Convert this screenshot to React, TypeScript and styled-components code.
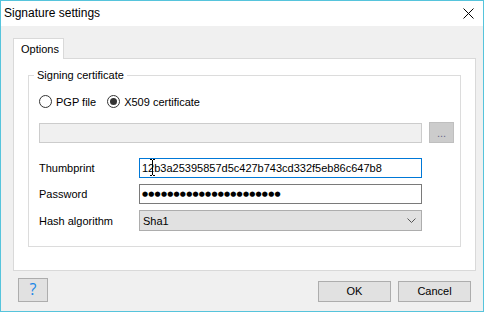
import React from "react";
import styled, { createGlobalStyle } from "styled-components";

const Global = createGlobalStyle`
  html, body { margin: 0; padding: 0; background: #ffffff; }
  body { font-family: "Liberation Sans", Arial, sans-serif; font-size: 11px; color: #000; }
  * { box-sizing: border-box; }
`;

const Window = styled.div`
  width: 484px;
  height: 312px;
  border: 1px solid #56c4dc;
  display: flex;
  flex-direction: column;
  background: #f0f0f0;
  overflow: hidden;
`;

const TitleBar = styled.div`
  flex: none;
  height: 25px;
  background: #ffffff;
  display: flex;
  align-items: center;
  justify-content: space-between;
  padding: 0 9px 0 3px;
`;

const Title = styled.div`
  font-size: 12px;
  line-height: 25px;
  color: #000;
`;

const CloseGlyph = styled.svg`
  display: block;
  width: 11px;
  height: 11px;
`;

const Body = styled.div`
  flex: 1;
  display: flex;
  flex-direction: column;
  padding: 12px 7px 9px 12px;
`;

const TabStrip = styled.div`
  display: flex;
  height: 20px;
`;

const Tab = styled.div<{ $active?: boolean }>`
  position: relative;
  z-index: 1;
  width: 51px;
  height: 21px;
  padding-left: 7px;
  line-height: 20px;
  background: ${(p) => (p.$active ? "#ffffff" : "#f0f0f0")};
  border: 1px solid #d9d9d9;
  border-bottom: none;
`;

const Panel = styled.div`
  height: 213px;
  background: #ffffff;
  border: 1px solid #d9d9d9;
  padding: 16px 14px 0 14px;
`;

const Group = styled.div`
  position: relative;
  height: 172px;
  border: 1px solid #dcdcdc;
  padding: 17px 0 0 10px;
`;

const Legend = styled.span`
  position: absolute;
  top: -8px;
  left: 5px;
  padding: 0 3px;
  line-height: 15px;
  background: #ffffff;
`;

const RadioRow = styled.div`
  display: flex;
  align-items: center;
  height: 17px;
  gap: 11px;
`;

const RadioOption = styled.label`
  display: flex;
  align-items: center;
  gap: 4px;
`;

const RadioCircle = styled.span<{ $checked?: boolean }>`
  width: 13px;
  height: 13px;
  border-radius: 50%;
  border: 1px solid #333333;
  background: #ffffff;
  display: flex;
  align-items: center;
  justify-content: center;
  &::after {
    content: "";
    display: ${(p) => (p.$checked ? "block" : "none")};
    width: 7px;
    height: 7px;
    border-radius: 50%;
    background: #333333;
  }
`;

const PathRow = styled.div`
  display: flex;
  align-items: center;
  gap: 7px;
  margin-top: 12px;
  height: 21px;
`;

const DisabledBox = styled.div`
  width: 383px;
  height: 20px;
  background: #f0f0f0;
  border: 1px solid #cccccc;
`;

const BrowseButton = styled.div`
  width: 25px;
  height: 21px;
  background: #cccccc;
  border: 1px solid #bfbfbf;
  color: #6a6a8a;
  text-align: center;
  line-height: 20px;
  font-size: 11px;
`;

const Form = styled.div`
  display: grid;
  grid-template-columns: 100px 283px;
  grid-template-rows: 20px 20px 21px;
  row-gap: 6px;
  margin-top: 15px;
`;

const FieldLabel = styled.div`
  align-self: center;
  line-height: 14px;
`;

const FieldWrap = styled.div`
  position: relative;
`;

const TextBox = styled.div<{ $focused?: boolean }>`
  height: 100%;
  border: 1px solid ${(p) => (p.$focused ? "#0078d7" : "#7a7a7a")};
  background: #ffffff;
  padding-left: 2px;
  line-height: 18px;
  white-space: nowrap;
  overflow: hidden;
`;

const Dots = styled.span`
  font-family: "DejaVu Sans", sans-serif;
  font-size: 7px;
  letter-spacing: 0.2px;
  line-height: 18px;
  vertical-align: top;
`;

const Combo = styled.div`
  height: 100%;
  display: flex;
  align-items: center;
  justify-content: space-between;
  background: #e1e1e1;
  border: 1px solid #adadad;
  padding: 0 5px 0 3px;
`;

const Chevron = styled.svg`
  display: block;
  width: 9px;
  height: 5px;
`;

const Cursor = styled.svg`
  position: absolute;
  left: 11px;
  top: 1px;
  width: 5px;
  height: 17px;
`;

const ButtonBar = styled.div`
  display: flex;
  align-items: flex-end;
  gap: 7px;
  margin: 7px 5px 0 5px;
`;

const HelpButton = styled.div`
  width: 30px;
  height: 24px;
  background: #e1e1e1;
  border: 1px solid #adadad;
  color: #1a86e6;
  font-family: "Open Sans", "Liberation Sans", sans-serif;
  font-size: 16px;
  font-weight: 400;
  line-height: 21px;
  text-align: center;
`;

const DialogButton = styled.div<{ $first?: boolean }>`
  width: 73px;
  height: 21px;
  margin-left: ${(p) => (p.$first ? "auto" : "0")};
  background: #e1e1e1;
  border: 1px solid #adadad;
  text-align: center;
  line-height: 19px;
`;

export default function App() {
  return (
    <>
      <Global />
      <Window>
        <TitleBar>
          <Title>Signature settings</Title>
          <CloseGlyph viewBox="0 0 11 11">
            <path d="M0.5 0.5 L10.5 10.5 M10.5 0.5 L0.5 10.5" stroke="#000" strokeWidth="1" fill="none" />
          </CloseGlyph>
        </TitleBar>
        <Body>
          <TabStrip>
            <Tab $active>Options</Tab>
          </TabStrip>
          <Panel>
            <Group>
              <Legend>Signing certificate</Legend>
              <RadioRow>
                <RadioOption>
                  <RadioCircle />
                  PGP file
                </RadioOption>
                <RadioOption>
                  <RadioCircle $checked />
                  X509 certificate
                </RadioOption>
              </RadioRow>
              <PathRow>
                <DisabledBox />
                <BrowseButton>...</BrowseButton>
              </PathRow>
              <Form>
                <FieldLabel>Thumbprint</FieldLabel>
                <FieldWrap>
                  <TextBox $focused>12b3a25395857d5c427b743cd332f5eb86c647b8</TextBox>
                  <Cursor viewBox="0 0 5 17">
                    <path d="M0 0.5 H2 M3 0.5 H5 M2.5 1 V16 M0 16.5 H2 M3 16.5 H5" stroke="#000" strokeWidth="1" fill="none" />
                  </Cursor>
                </FieldWrap>
                <FieldLabel>Password</FieldLabel>
                <TextBox>
                  <Dots>{"●".repeat(22)}</Dots>
                </TextBox>
                <FieldLabel>Hash algorithm</FieldLabel>
                <Combo>
                  <span>Sha1</span>
                  <Chevron viewBox="0 0 9 5">
                    <path d="M0.5 0.5 L4.5 4.5 L8.5 0.5" stroke="#555" strokeWidth="1" fill="none" />
                  </Chevron>
                </Combo>
              </Form>
            </Group>
          </Panel>
          <ButtonBar>
            <HelpButton>?</HelpButton>
            <DialogButton $first>OK</DialogButton>
            <DialogButton>Cancel</DialogButton>
          </ButtonBar>
        </Body>
      </Window>
    </>
  );
}
